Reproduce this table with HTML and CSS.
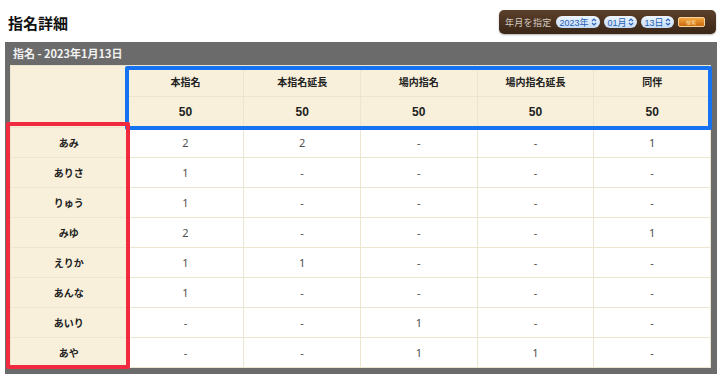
FILE: index.html
```html
<!DOCTYPE html>
<html lang="ja">
<head>
<meta charset="utf-8">
<link rel="stylesheet" href="styles.css">
</head>
<body>
<div class="top">
  <h1 class="title">指名詳細</h1>
  <div class="picker">
    <span class="picker-label">年月を指定</span>
    <span class="pill pill-year">2023年 <svg class="arr" viewBox="0 0 6 8" width="6" height="8"><path d="M1 3 L3 1 L5 3 M1 5 L3 7 L5 5" fill="none" stroke="#2a66b8" stroke-width="1.2"/></svg></span>
    <span class="pill">01月 <svg class="arr" viewBox="0 0 6 8" width="6" height="8"><path d="M1 3 L3 1 L5 3 M1 5 L3 7 L5 5" fill="none" stroke="#2a66b8" stroke-width="1.2"/></svg></span>
    <span class="pill">13日 <svg class="arr" viewBox="0 0 6 8" width="6" height="8"><path d="M1 3 L3 1 L5 3 M1 5 L3 7 L5 5" fill="none" stroke="#2a66b8" stroke-width="1.2"/></svg></span>
    <span class="btn">検索</span>
  </div>
</div>
<div class="panel">
  <div class="panel-head">指名 - 2023年1月13日</div>
  <table class="grid">
    <thead>
      <tr class="h1"><th rowspan="2" class="corner"></th><th>本指名</th><th>本指名延長</th><th>場内指名</th><th>場内指名延長</th><th>同伴</th></tr>
      <tr class="h2"><th>50</th><th>50</th><th>50</th><th>50</th><th>50</th></tr>
    </thead>
    <tbody>
      <tr><th>あみ</th><td>2</td><td>2</td><td>-</td><td>-</td><td>1</td></tr>
      <tr><th>ありさ</th><td>1</td><td>-</td><td>-</td><td>-</td><td>-</td></tr>
      <tr><th>りゅう</th><td>1</td><td>-</td><td>-</td><td>-</td><td>-</td></tr>
      <tr><th>みゆ</th><td>2</td><td>-</td><td>-</td><td>-</td><td>1</td></tr>
      <tr><th>えりか</th><td>1</td><td>1</td><td>-</td><td>-</td><td>-</td></tr>
      <tr><th>あんな</th><td>1</td><td>-</td><td>-</td><td>-</td><td>-</td></tr>
      <tr><th>あいり</th><td>-</td><td>-</td><td>1</td><td>-</td><td>-</td></tr>
      <tr><th>あや</th><td>-</td><td>-</td><td>1</td><td>1</td><td>-</td></tr>
    </tbody>
  </table>
  <div class="mark mark-blue"></div>
  <div class="mark mark-red"></div>
</div>
</body>
</html>
```
FILE: styles.css
```css
* { box-sizing: border-box; }
body {
  margin: 0;
  background: #fff;
  font-family: "Noto Sans CJK JP", "Noto Sans", sans-serif;
  color: #333;
}
.top {
  display: flex;
  justify-content: space-between;
  align-items: center;
  height: 42px;
  padding: 2px 7px 0 8px;
}
.title {
  margin: 0;
  font-size: 15px;
  font-weight: bold;
  color: #111;
  line-height: 1;
}
.picker {
  display: flex;
  align-items: center;
  gap: 4px;
  height: 24px;
  width: 217px;
  padding: 0 8px 0 6px;
  border-radius: 5px;
  background: linear-gradient(#5c402b, #3a2617);
  box-shadow: 0 1px 2px rgba(0,0,0,.3);
}
.picker-label {
  font-size: 9px;
  color: #d4ccc2;
  letter-spacing: 0.3px;
  white-space: nowrap;
}
.pill {
  display: flex;
  align-items: center;
  justify-content: space-between;
  font-family: "Liberation Sans", "Noto Sans CJK JP", sans-serif;
  font-size: 9px;
  color: #1d5fb0;
  background: linear-gradient(#eef5ff, #c4dbf6);
  border-radius: 6px;
  height: 12px;
  width: 33px;
  padding: 0 3px 0 4px;
  white-space: nowrap;
  flex: none;
}
.pill-year { width: 44px; }
.arr { display: block; flex: none; }
.btn {
  font-size: 5px;
  color: #ffe0a0;
  background: linear-gradient(#f4a640, #c9690f);
  border: 1px solid #f7d39a;
  border-radius: 2px;
  width: 27px;
  height: 10px;
  line-height: 8px;
  text-align: center;
  flex: none;
}
.panel {
  position: relative;
  margin-left: 5px;
  width: 712px;
  background: #6b6b6b;
  padding: 0 6px 6px 5px;
}
.panel-head {
  height: 23px;
  line-height: 23px;
  padding-left: 3px;
  font-size: 11px;
  font-weight: bold;
  color: #f2f2f2;
}
.grid {
  width: 701px;
  table-layout: fixed;
  border-collapse: collapse;
  background: #fff;
}
.grid th, .grid td {
  border: 1px solid #ece5cf;
  text-align: center;
  padding: 0;
}
.grid thead th {
  background: #f8f0da;
  font-size: 10px;
  font-weight: bold;
  color: #222;
}
.grid .h1 th { height: 31px; }
.grid .h2 th {
  height: 31px;
  font-family: "Liberation Sans", sans-serif;
  font-size: 12px;
}
.grid tbody th {
  background: #f8f0da;
  font-size: 10px;
  font-weight: bold;
  color: #222;
  height: 30px;
}
.grid tbody td {
  font-family: "Noto Sans", sans-serif;
  font-size: 11px;
  color: #505050;
  height: 30px;
}
.mark {
  position: absolute;
  pointer-events: none;
}
.mark-blue {
  left: 120px;
  top: 24px;
  width: 587px;
  height: 64px;
  border: 4px solid #1572f0;
  border-radius: 2px;
}
.mark-red {
  left: 1px;
  top: 80px;
  width: 124px;
  height: 247px;
  border: 4px solid #f22a40;
  border-radius: 2px;
}
```
